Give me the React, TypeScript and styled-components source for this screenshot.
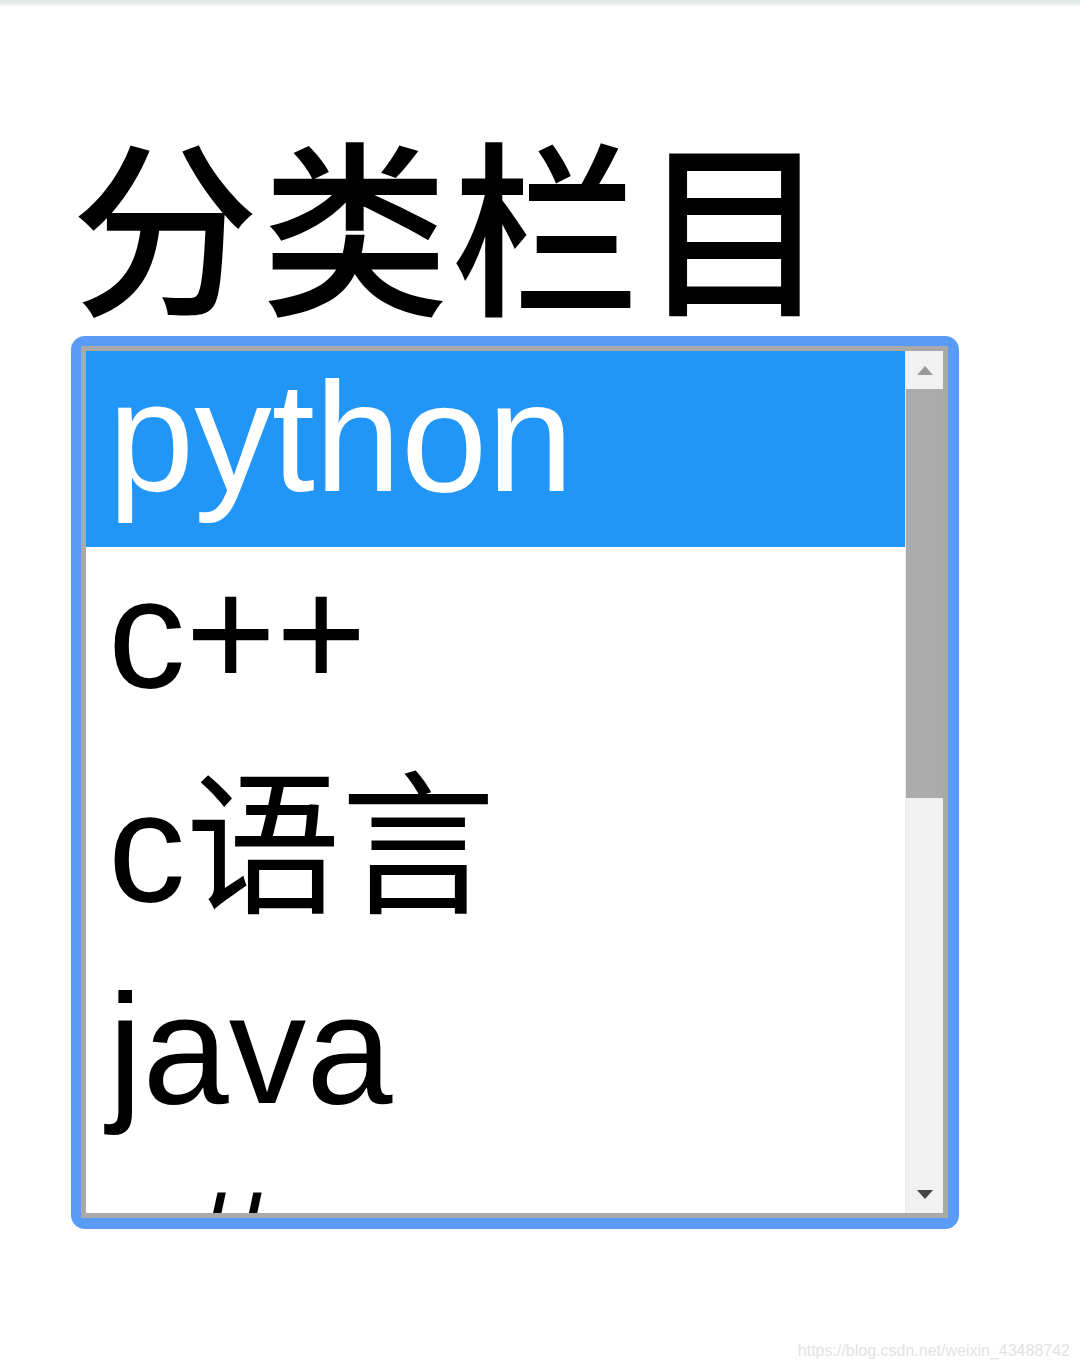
import React from "react";
import styled, { createGlobalStyle } from "styled-components";

const GlobalStyle = createGlobalStyle`
	html, body {
		margin: 0;
		padding: 0;
		background: #ffffff;
	}
	body {
		font-family: "Liberation Sans", "Noto Sans CJK SC", sans-serif;
		color: #000000;
	}
`;

const Page = styled.div`
	position: relative;
	min-height: 1369px;
	box-sizing: border-box;
	display: flex;
	flex-direction: column;
	align-items: flex-start;
	padding-left: 71px;
	overflow: hidden;
`;

const TopEdge = styled.div`
	position: absolute;
	top: 0;
	left: 0;
	right: 0;
	height: 6px;
	background: linear-gradient(#dfe5e5, #e9eeee 70%, #f7fbfb);
`;

const Title = styled.h1`
	margin: 128px 0 26px 0;
	font-family: "Noto Sans CJK SC", "Liberation Sans", sans-serif;
	font-weight: 500;
	font-size: 188px;
	line-height: 182px;
	letter-spacing: 2px;
`;

const FocusRing = styled.div`
	width: 888px;
	height: 893px;
	box-sizing: border-box;
	border: 10px solid #5a9bf7;
	border-right-width: 11px;
	border-bottom-width: 11px;
	border-radius: 14px;
	display: flex;
`;

const ListBox = styled.div`
	flex: 1;
	display: flex;
	border: 5px solid #a9a9a9;
	background: #ffffff;
	overflow: hidden;
`;

const Options = styled.div`
	flex: 1;
	display: flex;
	flex-direction: column;
	overflow: hidden;
`;

const Option = styled.div<{ $selected?: boolean; $tall?: boolean }>`
	flex-shrink: 0;
	padding: ${(p) => (p.$tall ? "18px 0 28px 22px" : "0 0 22px 22px")};
	font-size: 155px;
	line-height: 174px;
	white-space: nowrap;
	background: ${(p) => (p.$selected ? "#2196f7" : "transparent")};
	color: ${(p) => (p.$selected ? "#ffffff" : "#000000")};
`;

const Scrollbar = styled.div`
	width: 37px;
	display: flex;
	flex-direction: column;
	background: #f1f1f1;
	border-left: 1px solid #ececec;
`;

const ArrowButton = styled.div`
	height: 38px;
	display: flex;
	align-items: center;
	justify-content: center;
	flex-shrink: 0;
`;

const Track = styled.div`
	flex: 1;
	display: flex;
	flex-direction: column;
`;

const Thumb = styled.div`
	height: 409px;
	background: #ababab;
`;

const Watermark = styled.div`
	position: absolute;
	right: 10px;
	bottom: 9px;
	font-family: "Liberation Sans", sans-serif;
	font-size: 16px;
	color: #e2e2e2;
`;

const Arrow = ({ up, color }: { up?: boolean; color: string }) => (
	<svg width="16" height="9" viewBox="0 0 16 9">
		<polygon points={up ? "0,9 8,0 16,9" : "0,0 16,0 8,9"} fill={color} />
	</svg>
);

const items = [
	{ label: "python", selected: true },
	{ label: "c++" },
	{ label: "c语言", tall: true },
	{ label: "java" },
	{ label: "c#" },
];

function App() {
	return (
		<Page>
			<GlobalStyle />
			<TopEdge />
			<Title>分类栏目</Title>
			<FocusRing>
				<ListBox>
					<Options>
						{items.map((item) => (
							<Option
								key={item.label}
								$selected={item.selected}
								$tall={item.tall}
							>
								{item.label}
							</Option>
						))}
					</Options>
					<Scrollbar>
						<ArrowButton>
							<Arrow up color='#9a9a9a' />
						</ArrowButton>
						<Track>
							<Thumb />
						</Track>
						<ArrowButton>
							<Arrow color='#444444' />
						</ArrowButton>
					</Scrollbar>
				</ListBox>
			</FocusRing>
			<Watermark>https://blog.csdn.net/weixin_43488742</Watermark>
		</Page>
	);
}

export default App;
